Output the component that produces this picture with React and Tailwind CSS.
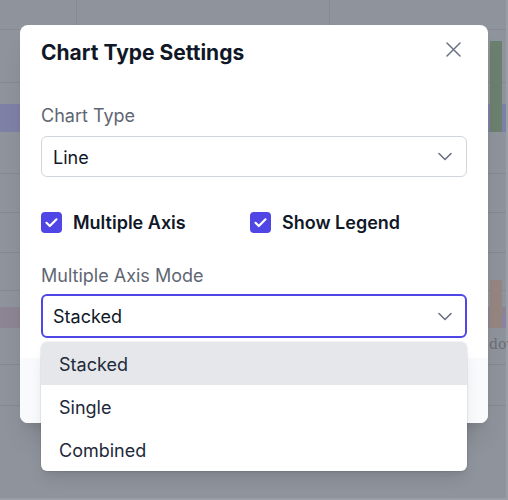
import React from "react";

function Chevron() {
  return (
    <svg width="14" height="9" viewBox="0 0 14 9" fill="none" className="shrink-0">
      <path d="M1 1.5 L7 7.5 L13 1.5" stroke="#6b7280" strokeWidth="1.6" strokeLinecap="round" strokeLinejoin="round" />
    </svg>
  );
}

function CheckBox({ label }) {
  return (
    <div className="flex items-center gap-[11px]">
      <span className="flex h-[21px] w-[21px] items-center justify-center rounded-[4px] bg-[#4f46e5]">
        <svg width="21" height="21" viewBox="0 0 21 21" fill="none">
          <path d="M5.5 10.8 L8.8 14 L15.5 7.3" stroke="white" strokeWidth="2.2" strokeLinecap="round" strokeLinejoin="round" />
        </svg>
      </span>
      <span className="mt-[2px] text-[18px] leading-6 font-semibold text-gray-900">{label}</span>
    </div>
  );
}

export default function App() {
  const line = "border-[#858992]";
  return (
    <div className="relative h-[500px] w-[508px] overflow-hidden bg-[#9a9ea6] font-['Inter',sans-serif]">
      {/* dimmed page behind the modal */}
      <div className="flex h-[498px] w-[506px] flex-col bg-[#8f939c]">
        <div className={`flex h-[30px] border-b ${line}`}>
          <div className={`w-[77px] border-r ${line}`} />
          <div className={`w-[253px] border-r ${line}`} />
          <div className="flex-1" />
        </div>
        <div className={`h-[53px] border-b ${line}`} />
        <div className={`flex h-[91px] flex-col border-b ${line}`}>
          <div className="mt-[21px] h-[28px] bg-[#7e81a6]" />
        </div>
        <div className={`h-[39px] border-b ${line}`} />
        <div className={`h-[40px] border-b ${line}`} />
        <div className={`h-[38px] border-b ${line}`} />
        <div className={`flex h-[74px] flex-col border-b ${line}`}>
          <div className="mt-[16px] h-[21px] bg-[#8d8494]" />
          <div className="mt-[6px] pl-[489px] font-['DejaVu_Serif',serif] text-[14px] leading-5 text-[#6b6e77] whitespace-nowrap">
            down
          </div>
        </div>
        <div className={`h-[41px] border-b ${line}`} />
        <div className="flex-1" />
      </div>

      {/* chart bars of the page behind */}
      <svg className="absolute inset-0" width="508" height="500" viewBox="0 0 508 500">
        <rect x="490" y="41" width="12" height="91" fill="#6b806f" />
        <rect x="490" y="280" width="12" height="48" fill="#958681" />
        <rect x="502" y="315" width="4" height="13" fill="#8a83a3" />
      </svg>

      {/* modal */}
      <div className="absolute left-[20px] top-[25px] flex h-[398px] w-[468px] flex-col rounded-lg bg-white shadow-xl">
        <div className="flex-1 px-[21px]">
          <div className="flex items-start justify-between pt-[14px]">
            <h2 className="text-[21px] leading-7 font-bold text-gray-900">Chart Type Settings</h2>
            <svg className="mr-[6px] mt-[3px]" width="15" height="15" viewBox="0 0 15 15" fill="none">
              <path d="M1 1 L14 14 M14 1 L1 14" stroke="#6b7280" strokeWidth="1.5" strokeLinecap="round" />
            </svg>
          </div>

          <div className="mt-[37px] text-[18px] leading-6 text-[#5f6673]">Chart Type</div>
          <div className="mt-[8px] flex h-[41px] items-center justify-between rounded-md border border-gray-300 pl-[11px] pr-[14px] text-[18px] leading-6 text-gray-900">
            <span className="mt-[2px]">Line</span>
            <Chevron />
          </div>

          <div className="mt-8 grid h-6 grid-cols-[209px_1fr] items-center">
            <CheckBox label="Multiple Axis" />
            <CheckBox label="Show Legend" />
          </div>

          <div className="mt-[31px] text-[18px] leading-6 text-[#5f6673]">Multiple Axis Mode</div>
          <div className="relative mt-[6px]">
            <div className="flex h-[44px] items-center justify-between rounded-md border-2 border-[#4f46e5] pl-[10px] pr-[13px] text-[18px] leading-6 text-gray-900">
              <span className="mt-[2px]">Stacked</span>
              <Chevron />
            </div>
            <div className="absolute left-0 right-0 top-full z-10 mt-1 overflow-hidden rounded-md bg-white shadow-lg ring-1 ring-black/5">
              <div className="flex h-[43px] items-center bg-[#e5e7eb] pl-[18px] text-[18px] leading-6 text-gray-800">
                <span className="mt-[2px]">Stacked</span>
              </div>
              <div className="flex h-[43px] items-center pl-[18px] text-[18px] leading-6 text-gray-800">
                <span className="mt-[2px]">Single</span>
              </div>
              <div className="flex h-[43px] items-center pl-[18px] text-[18px] leading-6 text-gray-800">
                <span className="mt-[2px]">Combined</span>
              </div>
            </div>
          </div>
        </div>
        <div className="h-[65px] rounded-b-lg bg-gray-50" />
      </div>
    </div>
  );
}
